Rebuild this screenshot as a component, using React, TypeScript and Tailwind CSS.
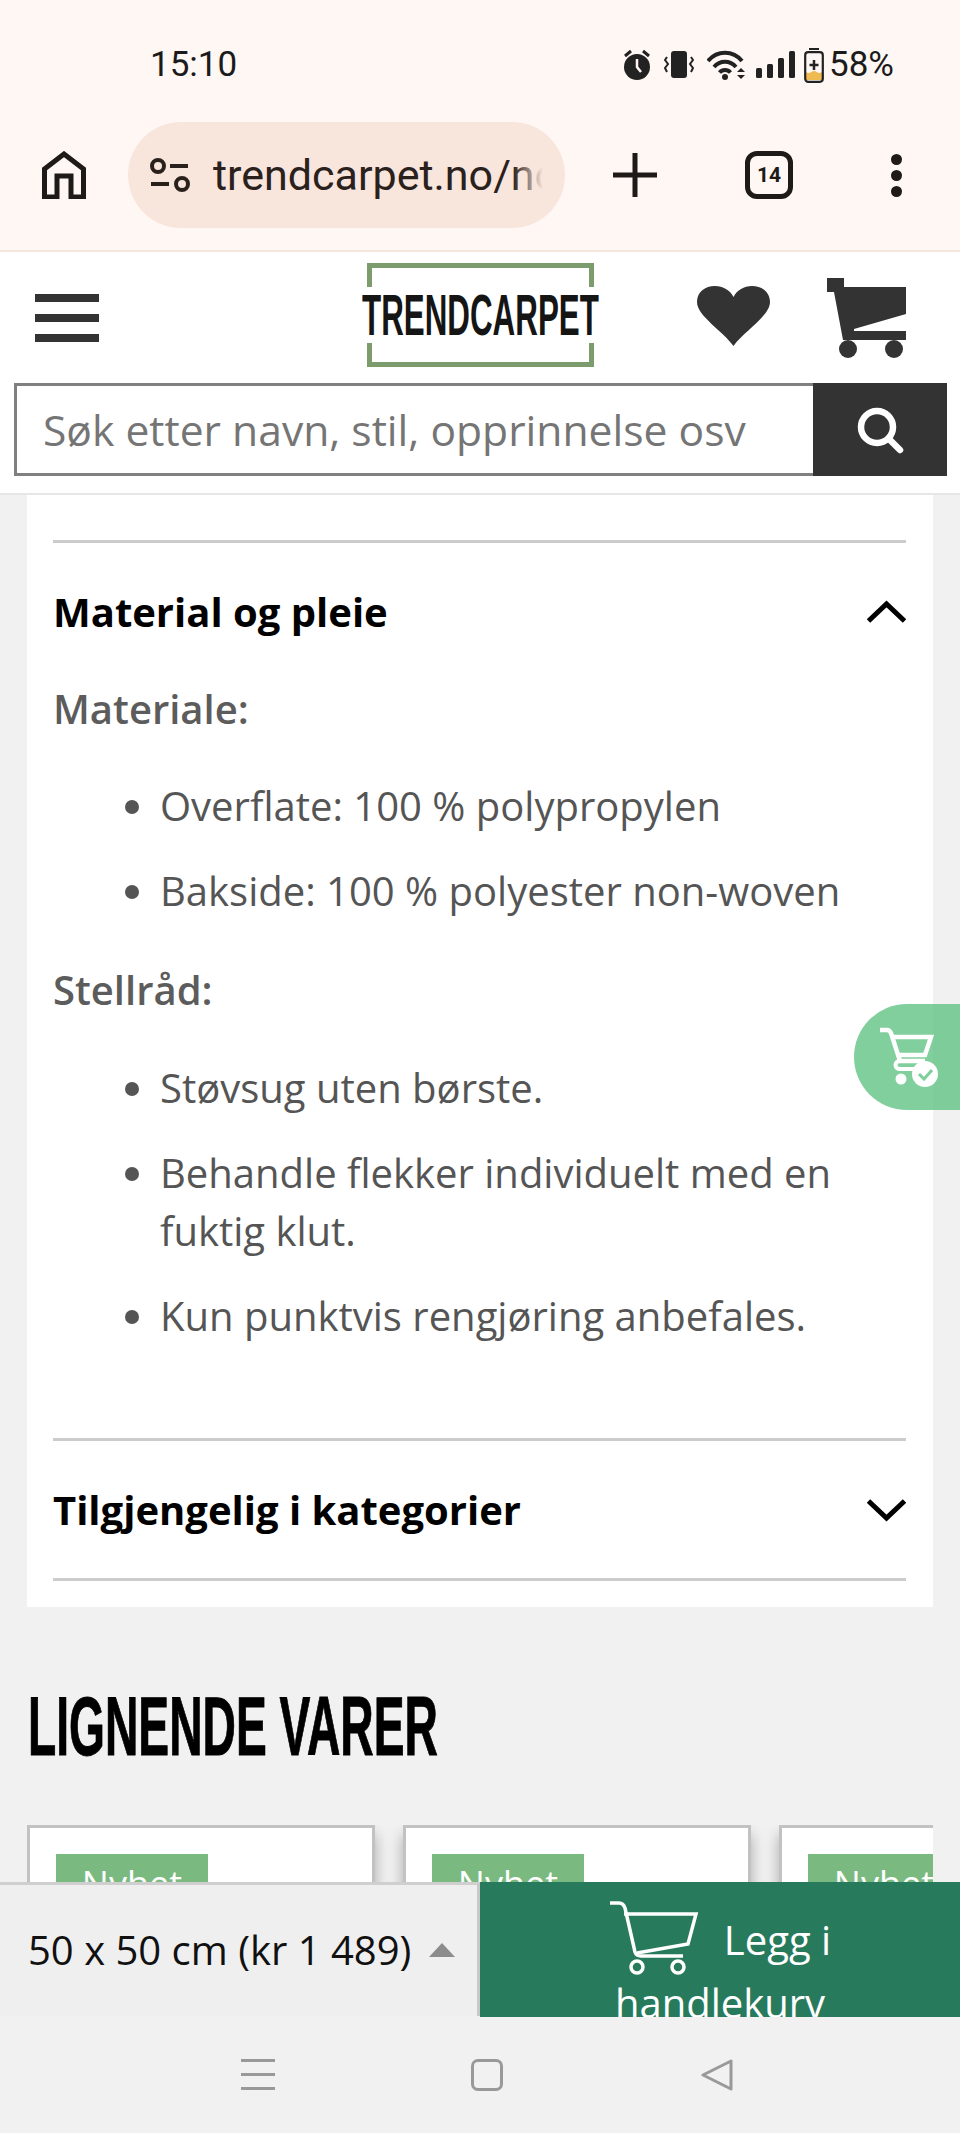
import React from "react";

const sans = "font-['Open_Sans',sans-serif]";

function Alarm() {
  return (
    <svg width="30" height="32" viewBox="0 0 30 32" className="text-[#222]">
      <circle cx="15" cy="18" r="13" fill="currentColor" />
      <path d="M3 7l6-5M27 7l-6-5" stroke="currentColor" strokeWidth="3" fill="none" />
      <path d="M15 10v8l4 5" stroke="#fff6f3" strokeWidth="2.5" fill="none" />
    </svg>
  );
}
function Vibrate() {
  return (
    <svg width="30" height="28" viewBox="0 0 30 28" fill="none" className="text-[#222]">
      <rect x="7" y="0" width="16" height="27" rx="3" fill="currentColor" />
      <path d="M3 6L1 9l3 4-3 4 2 4M27 6l2 3-3 4 3 4-2 4" stroke="currentColor" strokeWidth="2" />
    </svg>
  );
}
function Wifi() {
  return (
    <svg width="42" height="30" viewBox="0 0 42 30" fill="none" className="text-[#222]">
      <path d="M1 11C10 0 26 0 35 11M7 17c6-7 16-7 22 0M12.5 22.500c3-3.500 8-3.500 11 0" stroke="currentColor" strokeWidth="4" />
      <circle cx="18" cy="27" r="3" fill="currentColor" />
      <path d="M30 22l4-4 4 4zM30 25l4 4 4-4z" fill="currentColor" />
    </svg>
  );
}
function Signal() {
  return (
    <svg width="39" height="28" viewBox="0 0 39 28" className="text-[#222]">
      <rect x="0" y="17" width="6" height="10" rx="1.500" fill="currentColor" />
      <rect x="11" y="13" width="6" height="14" rx="1.500" fill="currentColor" />
      <rect x="22" y="7" width="6" height="20" rx="1.500" fill="currentColor" />
      <rect x="33" y="0" width="6" height="27" rx="1.500" fill="currentColor" />
    </svg>
  );
}
function Battery() {
  return (
    <svg width="20" height="35" viewBox="0 0 20 35" fill="none">
      <rect x="5" y="0" width="10" height="2" fill="#222" />
      <path d="M2 24c4 3 5-1 8-1s4 4 8 1v8H2z" fill="#efba50" />
      <rect x="1.200" y="4.200" width="17.600" height="29.600" rx="3" stroke="#222" strokeWidth="2.200" />
      <path d="M10 12v10M5.500 17h9" stroke="#222" strokeWidth="2.500" />
    </svg>
  );
}

function Home() {
  return (
    <svg width="44" height="48" viewBox="0 0 44 48" fill="none" stroke="#1e1a18" strokeWidth="5">
      <path d="M2.500 46V18L22 3l19.500 15v28H29V25H15v21z" />
    </svg>
  );
}
function SiteInfo() {
  return (
    <svg width="40" height="34" viewBox="0 0 40 34" fill="none" stroke="#2b211c" strokeWidth="4">
      <circle cx="8" cy="8" r="6" />
      <path d="M20 8h18M1 26h18" />
      <circle cx="32" cy="26" r="6" />
    </svg>
  );
}
function Chevron({ up }: { up?: boolean }) {
  return (
    <svg width="39" height="24" viewBox="0 0 39 24" fill="none" stroke="#000" strokeWidth="5">
      <path d={up ? "M1.500 21L19.500 4l18 17" : "M1.500 3l18 17 18-17"} />
    </svg>
  );
}
function HeaderCart() {
  return (
    <svg width="82" height="82" viewBox="0 0 82 82" fill="#333">
      <path d="M1 0h17v9h62v27L28 51v2h52v9H17L8 14H1z" />
      <circle cx="22" cy="71" r="9" />
      <circle cx="68" cy="71" r="9" />
    </svg>
  );
}
function ButtonCart() {
  return (
    <svg width="90" height="76" viewBox="0 0 90 76" fill="none" stroke="#fff" strokeWidth="3.500">
      <path d="M1 3h9c3 0 5 2 6 5l10 44c1 3 3 4 6 4h42" />
      <path d="M15 14h72l-8 30-51 9" />
      <circle cx="28" cy="67" r="6" />
      <circle cx="69" cy="67" r="6" />
    </svg>
  );
}
function FloatCart() {
  return (
    <svg width="60" height="60" viewBox="0 0 60 60" fill="none">
      <path d="M2 3h7c2 0 3 1 4 3l9 28h25" stroke="#fff" strokeWidth="4.500" />
      <path d="M13 10h40l-6 18H19" stroke="#fff" strokeWidth="4.500" />
      <path d="M22 34c-6 0-6 8 0 8h18" stroke="#fff" strokeWidth="4" />
      <circle cx="23" cy="52" r="5.500" fill="#fff" />
      <circle cx="47" cy="47" r="13" fill="#fff" />
      <path d="M41 47l5 5 8-9" stroke="#7fcf9b" strokeWidth="3" />
    </svg>
  );
}

function Product() {
  return (
    <div className="w-[348px] h-[200px] shrink-0 bg-white border-[3px] border-b-0 border-[#c2c2c2] shadow-[0_10px_14px_rgba(0,0,0,0.3)] pt-[26px] pl-[26px] overflow-hidden">
      <div className="w-[152px] h-[60px] bg-[#7aba80] text-white text-[36px] text-center leading-[60px]">Nyhet</div>
    </div>
  );
}

function Bullet({ children }: { children: React.ReactNode }) {
  return <li className="mb-[27px] marker:text-[#555]">{children}</li>;
}

export default function App() {
  return (
    <div className={`w-[960px] h-[2133px] flex flex-col overflow-hidden bg-[#f1f1f1] ${sans}`}>
      <div className="h-[250px] shrink-0 bg-[#fff7f4] font-['Roboto',sans-serif]">
        <div className="h-[122px] flex items-start pt-[45px] pl-[150px] pr-[66px] justify-between text-[#1b1b1b]">
          <span className="text-[35px] leading-[40px]">15:10</span>
          <div className="flex items-center h-[40px]">
            <div className="mr-[12px]"><Alarm /></div>
            <div className="mr-[13px]"><Vibrate /></div>
            <div className="mr-[7px]"><Wifi /></div>
            <div className="mr-[9px]"><Signal /></div>
            <div className="mr-[5px]"><Battery /></div>
            <span className="text-[35px] leading-[40px]">58%</span>
          </div>
        </div>
        <div className="flex items-center pl-[42px] h-[106px]">
          <Home />
          <div className="ml-[42px] w-[437px] h-[106px] rounded-[53px] bg-[#f8e5dc] flex items-center pl-[22px]">
            <SiteInfo />
            <div className="relative ml-[23px] w-[330px] overflow-hidden whitespace-nowrap text-[43px] leading-[56px] text-[#2b211c]">
              trendcarpet.no/no
              <div className="absolute right-0 top-0 bottom-0 w-[30px] bg-gradient-to-r from-transparent to-[#f8e5dc]" />
            </div>
          </div>
          <div className="ml-[48px] relative w-[44px] h-[44px]">
            <svg width="44" height="44" viewBox="0 0 44 44" stroke="#1e1a18" strokeWidth="5"><path d="M22 0v44M0 22h44" /></svg>
          </div>
          <div className="ml-[88px] w-[48px] h-[48px] rounded-[12px] border-[5px] border-[#1e1a18] flex items-center justify-center text-[21px] font-bold text-[#1e1a18] leading-none">14</div>
          <div className="ml-[98px] flex flex-col gap-[5px]">
            <div className="w-[11px] h-[11px] rounded-full bg-[#1e1a18]" />
            <div className="w-[11px] h-[11px] rounded-full bg-[#1e1a18]" />
            <div className="w-[11px] h-[11px] rounded-full bg-[#1e1a18]" />
          </div>
        </div>
      </div>

      <header className="h-[245px] shrink-0 bg-white border-t-[2px] border-t-[#f6e6de] border-b-[2px] border-b-[#e6e6e6] flex flex-col">
        <div className="h-[131px] shrink-0 flex items-center relative">
          <div className="ml-[35px] w-[64px] flex flex-col gap-[12px]">
            <div className="h-[8px] bg-[#333]" />
            <div className="h-[8px] bg-[#333]" />
            <div className="h-[8px] bg-[#333]" />
          </div>
          <div className="ml-[268px] relative w-[227px] h-[104px] -mt-[6px] border-[5px] border-[#7d9c6d]">
            <div className="absolute left-[-10px] right-[-10px] top-[19px] h-[56px] bg-white whitespace-nowrap">
              <span className="block origin-left scale-x-[0.55] text-[#151515] text-[57px] leading-[56px] font-['Liberation_Sans',sans-serif] font-bold">TRENDCARPET</span>
            </div>
          </div>
          <svg className="ml-[103px] mt-[-4px]" width="73" height="60" viewBox="0 0 73 60" fill="#333">
            <path d="M36.500 60C26 45 0 30 0 16 0 6 8 0 18 0c8 0 15 4 18.500 11C40 4 47 0 55 0c10 0 18 6 18 16 0 14-26 29-36.500 44z" />
          </svg>
          <div className="ml-[56px] mt-[2px]"><HeaderCart /></div>
        </div>
        <div className="ml-[14px] mr-[13px] h-[93px] flex">
          <div className="flex-1 border-[3px] border-[#808080] border-r-0 bg-white pl-[26px] flex items-center text-[42.6px] text-[#757575] whitespace-nowrap overflow-hidden">
            Søk etter navn, stil, opprinnelse osv
          </div>
          <div className="w-[134px] bg-[#333] flex items-center justify-center">
            <svg width="48" height="48" viewBox="0 0 48 48" fill="none" stroke="#fff" strokeWidth="6.500" strokeLinecap="round">
              <circle cx="21" cy="21" r="16" />
              <path d="M33 33l11 11" />
            </svg>
          </div>
        </div>
      </header>

      <main className="relative flex-1 min-h-0 overflow-hidden">
        <div className="mx-[27px] h-[1112px] bg-white pl-[26px] pr-[27px] pt-[45px] text-[#555]">
          <div className="border-t-[3px] border-[#ccc] h-[141px] flex items-center justify-between -mb-[1px]">
            <span className="text-[40px] font-bold text-black -mt-[1px]">Material og pleie</span>
            <Chevron up />
          </div>
          <p className="text-[40px] leading-[58px] font-semibold text-[#5c5c5c]">Materiale:</p>
          <ul className="list-disc pl-[107px] text-[40px] leading-[58px] mt-[39px]">
            <Bullet>Overflate: 100 % polypropylen</Bullet>
            <Bullet>Bakside: 100 % polyester non-woven</Bullet>
          </ul>
          <p className="text-[40px] leading-[58px] font-semibold text-[#5c5c5c] mt-[41px]">Stellråd:</p>
          <ul className="list-disc pl-[107px] text-[40px] leading-[58px] mt-[40px]">
            <Bullet>Støvsug uten børste.</Bullet>
            <Bullet>Behandle flekker individuelt med en fuktig klut.</Bullet>
            <Bullet>Kun punktvis rengjøring anbefales.</Bullet>
          </ul>
          <div className="mt-[93px] border-t-[3px] border-b-[3px] border-[#ccc] h-[143px] flex items-center justify-between">
            <span className="text-[40px] font-bold text-black">Tilgjengelig i kategorier</span>
            <Chevron />
          </div>
        </div>

        <h2 className="ml-[28px] mt-[79px] h-[80px] origin-left scale-x-[0.55] whitespace-nowrap font-['Liberation_Sans',sans-serif] font-bold text-[84px] leading-[80px] text-black [-webkit-text-stroke:1px_#000]">LIGNENDE VARER</h2>
        <div className="mx-[27px] mt-[59px] flex gap-[28px] overflow-hidden">
          <Product />
          <Product />
          <Product />
        </div>

        <div className="absolute right-0 top-[509px] w-[106px] h-[106px] rounded-l-[53px] bg-[#55bf7c]/75 flex items-center pl-[24px]">
          <FloatCart />
        </div>
      </main>

      <div className="h-[134px] shrink-0 flex relative">
        <div className="w-[480px] shrink-0 bg-[#efefef] border-t-[3px] border-r-[3px] border-t-[#cfcfcf] border-r-[#c8c8c8] flex items-center pl-[28px] pb-[1px]">
          <span className="text-[40px] text-[#111] whitespace-nowrap">50 x 50 cm (kr 1 489)</span>
          <svg className="ml-[18px]" width="26" height="14" viewBox="0 0 26 14" fill="#8c8c8c"><path d="M13 0l13 14H0z" /></svg>
        </div>
        <div className="flex-1 min-w-0 bg-[#277a5c] overflow-hidden text-white text-[40px] leading-[62px] text-center pt-[19px] -mb-[1px]">
          <div className="flex items-center justify-center h-[74px]">
            <ButtonCart />
            <span className="ml-[25px] mt-[4px]">Legg i</span>
          </div>
          <div className="leading-[55px]">handlekurv</div>
        </div>
      </div>

      <nav className="h-[117px] shrink-0 bg-[#f1f1f1] flex items-center pl-[241px]">
        <div className="w-[34px] flex flex-col gap-[11px]">
          <div className="h-[3px] bg-[#999]" />
          <div className="h-[3px] bg-[#999]" />
          <div className="h-[3px] bg-[#999]" />
        </div>
        <div className="ml-[196px] w-[32px] h-[32px] rounded-[7px] border-[3px] border-[#999]" />
        <svg className="ml-[198px]" width="32" height="32" viewBox="0 0 32 32" fill="none" stroke="#999" strokeWidth="3" strokeLinejoin="round"><path d="M30 2v28L2 16z" /></svg>
      </nav>
    </div>
  );
}
